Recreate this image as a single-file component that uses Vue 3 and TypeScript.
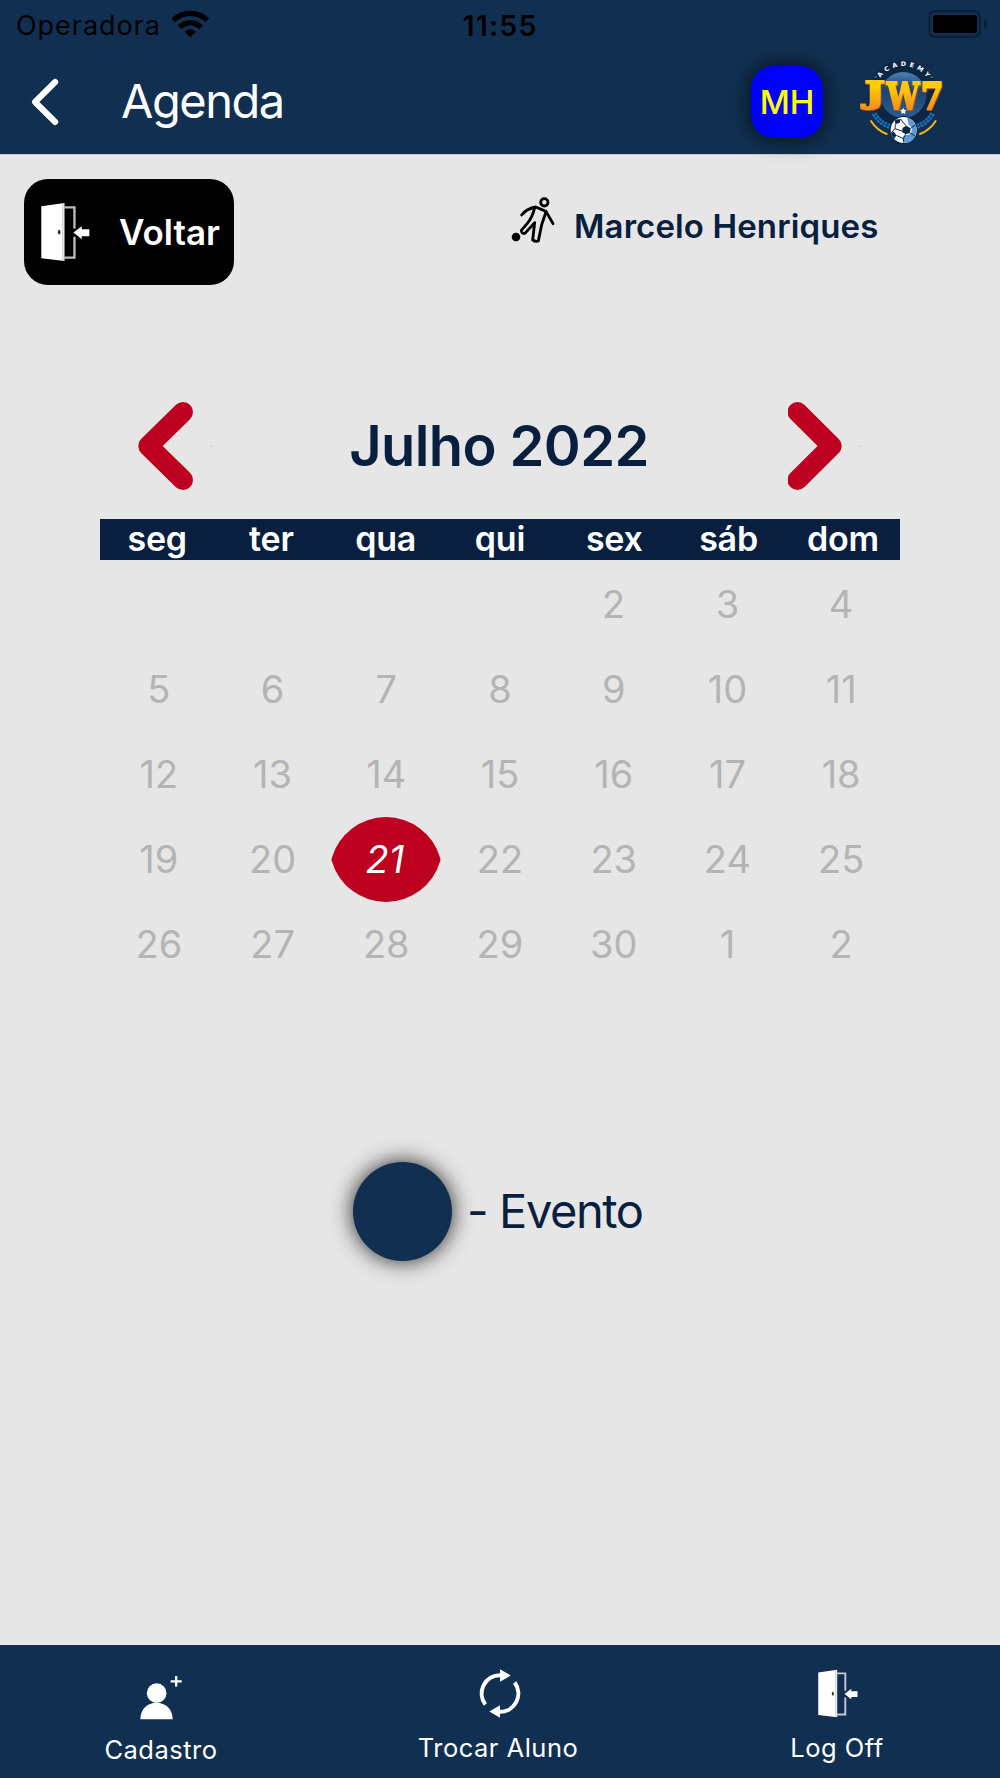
<script setup lang="ts">
import { ref } from "vue";

const weekDays = ["seg", "ter", "qua", "qui", "sex", "sáb", "dom"];
const weeks: (number | null)[][] = [
  [null, null, null, null, 2, 3, 4],
  [5, 6, 7, 8, 9, 10, 11],
  [12, 13, 14, 15, 16, 17, 18],
  [19, 20, 21, 22, 23, 24, 25],
  [26, 27, 28, 29, 30, 1, 2],
];
const selected = ref(21);

// letters of the crest, laid along the arc
const crest = [
  { c: "A", x: 448, y: 226, r: -52 },
  { c: "C", x: 468, y: 209, r: -34 },
  { c: "A", x: 492, y: 198, r: -17 },
  { c: "D", x: 518, y: 195, r: 0 },
  { c: "E", x: 544, y: 198, r: 17 },
  { c: "M", x: 569, y: 209, r: 34 },
  { c: "Y", x: 590, y: 226, r: 52 },
];
const title = [
  { c: "J", x: 402, y: 311, w: 60, size: 88 },
  { c: "W", x: 468, y: 329, w: 98, size: 111 },
  { c: "7", x: 570, y: 329, w: 68, size: 111 },
];

const selectDay = (day: number | null) => {
  if (day !== null) {
    selected.value = day;
  }
};
</script>

<template>
  <div class="screen">
    <svg class="defs" width="0" height="0">
      <symbol id="door" viewBox="120 125 152 181">
        <path d="M123 138L193 128V303L123 295Z" fill="#fff" />
        <path
          d="M193 141H223V205M223 230V293H193"
          fill="none"
          stroke="#fff"
          stroke-opacity="0.75"
          stroke-width="7"
        />
        <path d="M188 129V302" stroke="#999" stroke-width="2" />
        <path d="M220 217L245 198V207H268V228H245V237Z" fill="#fff" />
        <ellipse cx="177" cy="216" rx="4" ry="7" fill="#333" />
      </symbol>
    </svg>

    <header>
      <div class="status">
        <div class="carrier">
          <span>Operadora</span>
          <svg width="37" height="28" viewBox="515 29 111 84" fill="none" stroke="#000">
            <path d="M519 60A73 73 0 0 1 621 60" stroke-width="16" />
            <path d="M538 81A45 45 0 0 1 602 81" stroke-width="16" />
            <path d="M570 111L553 94Q570 79 587 94Z" fill="#000" stroke="none" />
          </svg>
        </div>
        <div class="clock">11:55</div>
        <div class="battery">
          <svg width="60" height="28" viewBox="594 30 180 84">
            <rect
              x="598"
              y="34"
              width="152"
              height="76"
              rx="17"
              fill="none"
              stroke="#0b1e33"
              stroke-width="6"
            />
            <rect x="609" y="45" width="132" height="54" rx="8" />
            <path d="M762 57Q772 63 772 72T762 87Z" fill="#0b1e33" />
          </svg>
        </div>
      </div>
      <div class="navbar">
        <svg class="back" width="28" height="48" viewBox="0 0 28 48">
          <path
            d="M24.2 4L4 24L24.2 44"
            fill="none"
            stroke="#fff"
            stroke-width="6"
            stroke-linecap="round"
            stroke-linejoin="round"
          />
        </svg>
        <h1>Agenda</h1>
        <div class="avatar">MH</div>
        <svg class="crest" width="86" height="88" viewBox="385 177 258 264">
          <defs>
            <linearGradient id="gold" gradientUnits="userSpaceOnUse" x1="0" y1="246" x2="0" y2="332">
              <stop offset="0.2" stop-color="#ffcc08" />
              <stop offset="0.95" stop-color="#f7901e" />
            </linearGradient>
            <linearGradient id="disc" x1="0" y1="0" x2="0" y2="1">
              <stop offset="0" stop-color="#4d7fb5" />
              <stop offset="0.4" stop-color="#1b4270" />
              <stop offset="1" stop-color="#2c5f95" />
            </linearGradient>
          </defs>
          <circle cx="518" cy="286" r="103" fill="#0c2643" />
          <circle cx="518" cy="288" r="69" fill="url(#disc)" />
          <g class="crest-name">
            <text
              v-for="(l, i) in crest"
              :key="i"
              :transform="`translate(${l.x} ${l.y}) rotate(${l.r})`"
              y="7"
            >
              {{ l.c }}
            </text>
          </g>
          <path d="M432 236l6-4M606 236l-6-4" stroke="#1c75bc" stroke-width="5" />
          <g class="crest-title">
            <text
              v-for="t in title"
              :key="t.c"
              :x="t.x"
              :y="t.y"
              :font-size="t.size"
              :textLength="t.w"
              lengthAdjust="spacingAndGlyphs"
            >{{ t.c }}</text>
          </g>
          <path d="M518 326l3 6 7 1-5 5 1 7-6-3-6 3 1-7-5-5 7-1z" fill="#fff" />
          <g fill="none" stroke="#1a70b5">
            <path d="M430 343Q444 371 478 382M606 343Q592 371 558 382" stroke-width="15" stroke-dasharray="9 2" />
            <path d="M430 343Q444 371 478 382M606 343Q592 371 558 382" stroke="#0c2643" stroke-width="2" />
          </g>
          <path
            d="M421 366Q439 394 468 405M615 366Q597 394 568 405"
            fill="none"
            stroke="#f5b51b"
            stroke-width="6"
            stroke-linecap="round"
          />
          <circle cx="519" cy="393" r="42" fill="#0c2643" />
          <circle cx="519" cy="393" r="39" fill="#fff" />
          <path d="M529 355Q558 366 558 395Q554 427 527 432L516 424L518 410L541 405L544 386L534 378Z" fill="#5f9bd3" />
          <path d="M527 380L540 388L538 402L525 406L514 399L516 386Z" fill="#0c2643" />
          <path d="M493 362L510 360L507 371L494 376ZM481 401L490 398L497 409L491 419Q482 411 481 401Z" fill="#0c2643" />
          <path
            d="M510 360L519 373L527 380M494 376L493 389L482 401M493 389L514 396M525 406L518 419L497 409M538 402L552 410M540 388L555 377M518 419L520 432"
            fill="none"
            stroke="#0c2643"
            stroke-width="3"
          />
        </svg>
      </div>
    </header>

    <main>
      <div class="toolbar">
        <button class="voltar">
          <svg width="51" height="60"><use href="#door" /></svg>
          <span>Voltar</span>
        </button>
        <div class="student">
          <svg width="45" height="48" viewBox="60 48 135 144">
            <circle cx="78" cy="171" r="13" />
            <g fill="none" stroke="#000" stroke-width="8.500" stroke-linecap="round" stroke-linejoin="round">
              <circle cx="163" cy="67" r="11" />
              <path d="M95 105Q108 87 137 81L168 94L189 131" />
              <path d="M134 83Q127 113 112 130L94 151Q94 162 105 160L134 128L128 180Q137 186 145 183L155 134L168 96" />
            </g>
          </svg>
          <span>Marcelo Henriques</span>
        </div>
      </div>

      <section class="calendar">
        <div class="month">
          <svg width="76" height="90" viewBox="0 0 76 90">
            <path
              d="M45 11L10.3 45L45 79"
              fill="none"
              stroke="#be0020"
              stroke-width="20"
              stroke-linecap="round"
              stroke-linejoin="round"
            />
            <circle cx="73.3" cy="45" r="0.6" fill="#d9747f" />
          </svg>
          <h2>Julho 2022</h2>
          <svg width="76" height="90" viewBox="0 0 76 90">
            <path
              d="M9.5 11L43.7 45L9.5 79"
              fill="none"
              stroke="#be0020"
              stroke-width="20"
              stroke-linecap="round"
              stroke-linejoin="round"
            />
            <circle cx="72.3" cy="45" r="0.6" fill="#d9747f" />
          </svg>
        </div>
        <div class="week-days">
          <span v-for="d in weekDays" :key="d">{{ d }}</span>
        </div>
        <div class="days">
          <div v-for="(week, w) in weeks" :key="w" class="week">
            <div
              v-for="(day, i) in week"
              :key="i"
              :class="['day', { selected: day === selected }]"
              @click="selectDay(day)"
            >
              <svg v-if="day === selected" width="110" height="85" viewBox="0 0 110 85">
                <path
                  d="M0.8 41A56.600 56.600 0 0 1 55 0A56.600 56.600 0 0 1 109.2 41Q109.8 42.5 109.2 44A56.600 56.600 0 0 1 55 85A56.600 56.600 0 0 1 0.8 44Q0.2 42.5 0.8 41Z"
                  fill="#be0020"
                />
              </svg>
              <span>{{ day }}</span>
            </div>
          </div>
        </div>
      </section>

      <div class="legend">
        <div class="dot"></div>
        <span>- Evento</span>
      </div>
    </main>

    <footer>
      <div class="tab cadastro">
        <svg width="42" height="44" viewBox="182 110 126 132" fill="#fff">
          <circle cx="232" cy="161.500" r="29.500" />
          <path d="M183 240C183 209 204 190 231.500 190S280 209 280 240Z" />
          <path d="M287 110h7v12.500h13v7h-13v12h-7v-12h-13v-7h13z" />
        </svg>
        <span>Cadastro</span>
      </div>
      <div class="tab trocar">
        <svg width="42" height="49" viewBox="237 86.500 126 147">
          <g fill="none" stroke="#fff" stroke-width="12">
            <path d="M256 193A55 55 0 0 1 301 105" />
            <path d="M344 127A55 55 0 0 1 299 215" />
          </g>
          <path d="M300 87L332 106L300 125ZM300 195L268 214L300 233Z" fill="#fff" />
        </svg>
        <span>Trocar Aluno</span>
      </div>
      <div class="tab logoff">
        <svg width="42" height="49"><use href="#door" /></svg>
        <span>Log Off</span>
      </div>
    </footer>
  </div>
</template>

<style>
body {
  margin: 0;
}
</style>

<style scoped>
.screen {
  display: flex;
  flex-direction: column;
  width: 1000px;
  height: 1778px;
  background-color: #e6e6e6;
  font-family: Inter, "Liberation Sans", sans-serif;
  overflow: hidden;
}
.defs {
  position: absolute;
}
svg {
  display: block;
  flex: none;
}
span,
h1,
h2 {
  white-space: nowrap;
}
header {
  height: 154px;
  background-color: #113051;
  border-bottom: 1px solid #c9cdd3;
  box-sizing: content-box;
}
.status {
  display: grid;
  grid-template-columns: 1fr 1fr 1fr;
  height: 50px;
  line-height: 52px;
  font-size: 27px;
  color: #000;
}
.carrier {
  display: flex;
  padding-left: 16px;
  gap: 11px;
  letter-spacing: 0.95px;
}
.carrier svg {
  margin-top: 10px;
}
.clock {
  text-align: center;
  font-size: 28.5px;
  font-weight: 600;
  line-height: 51px;
  letter-spacing: 1.2px;
}
.battery {
  display: flex;
  justify-content: flex-end;
  padding: 10px 12px 0 0;
}
.navbar {
  display: flex;
  align-items: center;
  height: 103px;
  padding-left: 31px;
}
h1 {
  margin: 0 0 0 62px;
  width: 630px;
  font-size: 47px;
  font-weight: 400;
  line-height: 60px;
  letter-spacing: -1.5px;
  position: relative;
  top: -1px;
  color: #fff;
}
.avatar {
  flex: none;
  width: 72px;
  height: 72px;
  border-radius: 23px;
  background-color: #0000ff;
  box-shadow: 0 0 22px rgba(0, 0, 0, 0.75);
  color: #ffff00;
  font-size: 33px;
  font-weight: 500;
  line-height: 72px;
  text-align: center;
}
.crest {
  margin-left: 36px;
  overflow: visible;
}
.crest-name text {
  font-family: "DejaVu Sans", sans-serif;
  font-size: 19px;
  font-weight: 700;
  fill: #fff;
  text-anchor: middle;
}
.crest-title text {
  font-family: "DejaVu Serif", serif;
  font-weight: 700;
  fill: url(#gold);
  stroke: url(#gold);
  stroke-width: 6px;
  filter: drop-shadow(2px 3px 0 #b2561c);
}
main {
  flex: 1;
  display: flex;
  flex-direction: column;
}
.toolbar {
  display: flex;
  padding: 24px 24px 0;
  height: 106px;
}
.voltar {
  display: flex;
  align-items: center;
  width: 210px;
  height: 106px;
  padding: 0 0 0 16px;
  border: none;
  border-radius: 24px;
  background-color: #000;
  color: #fff;
  font-family: inherit;
  font-size: 35px;
  font-weight: 600;
  cursor: pointer;
}
.voltar span {
  margin-left: 28px;
}
.student {
  display: flex;
  height: 60px;
  margin: 17px 0 0 276px;
  color: #081f3f;
  font-size: 33px;
  font-weight: 600;
  line-height: 60px;
  letter-spacing: 0.12px;
}
.student span {
  margin-left: 19px;
}
.calendar {
  width: 800px;
  margin: 116px auto 0;
}
.month {
  display: flex;
  align-items: center;
  justify-content: space-between;
  height: 90px;
  padding: 0 36px 0 38px;
}
h2 {
  margin: 0 4px 0 0;
  font-size: 56px;
  font-weight: 600;
  line-height: 90px;
  letter-spacing: -0.6px;
  color: #081f3f;
}
.week-days {
  display: grid;
  grid-template-columns: repeat(7, 1fr);
  height: 41px;
  margin-top: 28px;
  background-color: #081f3f;
  color: #fff;
  font-size: 34px;
  font-weight: 600;
  line-height: 40px;
  letter-spacing: -0.2px;
  text-align: center;
}
.days {
  padding: 2px 2px 0;
}
.week {
  display: grid;
  grid-template-columns: repeat(7, 1fr);
  height: 85px;
}
.day {
  display: grid;
  place-items: center;
  color: #b4b4b4;
  font-size: 38px;
  cursor: pointer;
}
.day svg,
.day span {
  grid-area: 1 / 1;
}
.day span {
  margin-bottom: 2px;
}
.day.selected {
  color: #fff;
  font-style: italic;
}
.day.selected span {
  margin-right: 3px;
}
.legend {
  display: flex;
  align-items: center;
  height: 99px;
  margin: 175px 0 0 353px;
  color: #081f3f;
  font-size: 47px;
}
.dot {
  width: 99px;
  height: 99px;
  border-radius: 50%;
  background-color: #113051;
  box-shadow: 0 0 22px rgba(0, 0, 0, 0.85);
}
.legend span {
  margin-left: 15px;
  line-height: 60px;
  letter-spacing: -1.4px;
  position: relative;
  top: -1px;
}
footer {
  display: grid;
  grid-template-columns: 322px 352px 326px;
  height: 133px;
  background-color: #113051;
  color: #fff;
}
.tab {
  display: flex;
  flex-direction: column;
  align-items: center;
  padding-top: 24px;
  font-size: 25.5px;
  letter-spacing: 0.5px;
}
.tab span {
  line-height: 30px;
  margin-top: 15px;
}
.cadastro {
  padding-top: 31px;
}
.cadastro span {
  margin-top: 15px;
}
.trocar svg {
  margin-left: 4px;
}
.logoff svg {
  margin-left: 1px;
}
</style>
